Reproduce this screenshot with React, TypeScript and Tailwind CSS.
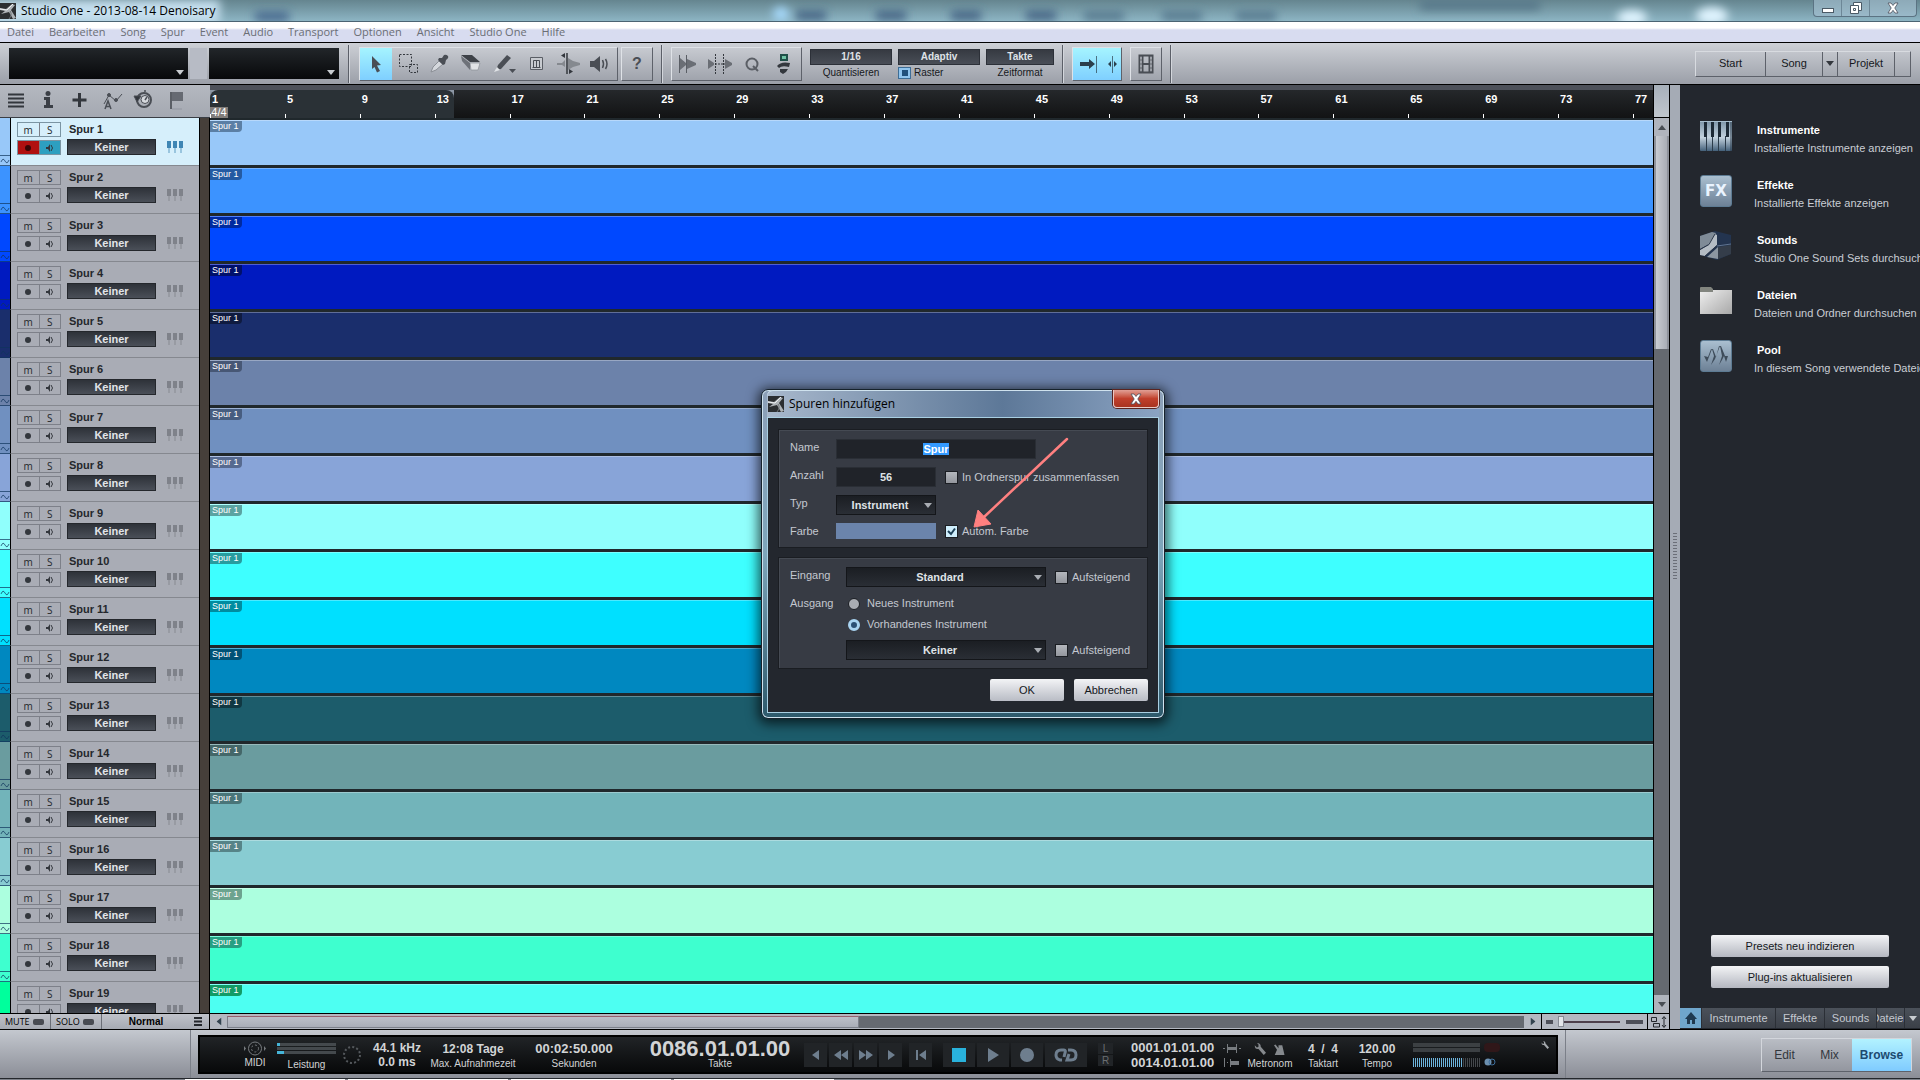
import { useEffect, useRef } from 'react';
import type { ReactNode } from 'react';

const menuItems = ['Datei', 'Bearbeiten', 'Song', 'Spur', 'Event', 'Audio', 'Transport', 'Optionen', 'Ansicht', 'Studio One', 'Hilfe'];

const bars = [1, 5, 9, 13, 17, 21, 25, 29, 33, 37, 41, 45, 49, 53, 57, 61, 65, 69, 73, 77];

const tracks = [
  { name: 'Spur 1', color: 'bg-[#98c8f9]', label: 'bg-[#5b7fa5]' },
  { name: 'Spur 2', color: 'bg-[#3c93ff]', label: 'bg-[#245aa2]' },
  { name: 'Spur 3', color: 'bg-[#0048ff]', label: 'bg-[#002aa0]' },
  { name: 'Spur 4', color: 'bg-[#001ac0]', label: 'bg-[#00106c]' },
  { name: 'Spur 5', color: 'bg-[#1a2e6c]', label: 'bg-[#0f1b40]' },
  { name: 'Spur 6', color: 'bg-[#6c82aa]', label: 'bg-[#475775]' },
  { name: 'Spur 7', color: 'bg-[#7090c0]', label: 'bg-[#475d80]' },
  { name: 'Spur 8', color: 'bg-[#88a4d8]', label: 'bg-[#566a90]' },
  { name: 'Spur 9', color: 'bg-[#90fffc]', label: 'bg-[#5ba3a2]' },
  { name: 'Spur 10', color: 'bg-[#3effff]', label: 'bg-[#279c9f]' },
  { name: 'Spur 11', color: 'bg-[#00e0ff]', label: 'bg-[#008ca0]' },
  { name: 'Spur 12', color: 'bg-[#0088c0]', label: 'bg-[#005276]' },
  { name: 'Spur 13', color: 'bg-[#1c5c6b]', label: 'bg-[#103843]' },
  { name: 'Spur 14', color: 'bg-[#6a9c9f]', label: 'bg-[#446769]' },
  { name: 'Spur 15', color: 'bg-[#72b4ba]', label: 'bg-[#497579]' },
  { name: 'Spur 16', color: 'bg-[#88ccd2]', label: 'bg-[#568488]' },
  { name: 'Spur 17', color: 'bg-[#acffdf]', label: 'bg-[#6ca38f]' },
  { name: 'Spur 18', color: 'bg-[#3effcf]', label: 'bg-[#279f82]' },
  { name: 'Spur 19', color: 'bg-[#4dfff2]', label: 'bg-[#129b66]', strip: 'bg-[#00ff9c]' },
];

const browserItems = [
  { title: 'Instrumente', text: 'Installierte Instrumente anzeigen', icon: <PianoIcon /> },
  { title: 'Effekte', text: 'Installierte Effekte anzeigen', icon: <FxIcon /> },
  { title: 'Sounds', text: 'Studio One Sound Sets durchsuchen', icon: <CubeIcon /> },
  { title: 'Dateien', text: 'Dateien und Ordner durchsuchen', icon: <FolderIcon /> },
  { title: 'Pool', text: 'In diesem Song verwendete Dateien', icon: <PoolIcon /> },
];

function Logo() {
  return (
    <svg className="size-4 shrink-0" viewBox="0 0 16 16">
      <rect width="16" height="16" fill="#2b2e31" />
      <path d="M0 5L6 6L12 1L15 2L11 7L16 15L13 16L9 9L1 11L5 8L0 7Z" fill="#aeb3b7" />
      <path d="M0 6L7 7L13 1" fill="none" stroke="#eceff1" />
      <path d="M10 8C12 11 11 13 9 16" fill="none" stroke="#6d7276" />
    </svg>
  );
}

function PianoIcon() {
  return (
    <svg className="size-8 shrink-0" viewBox="0 0 32 32">
      <defs>
        <linearGradient id="keys" x1="0" y1="0" x2="0" y2="1">
          <stop offset="0" stopColor="#7d95a8" />
          <stop offset=".55" stopColor="#c3d2de" />
          <stop offset="1" stopColor="#44607a" />
        </linearGradient>
      </defs>
      <rect y="1" width="32" height="30" rx="1" fill="url(#keys)" />
      <path d="M6.500 16V31M12.500 16V31M18.500 16V31M25.500 16V31M31 2V31" stroke="#2b3b4a" />
      <path d="M4 2H7V17H4ZM11 2H14V17H11ZM18 2H21V17H18ZM26 2H29V17H26Z" fill="#1d2a36" />
      <path d="M0 1.500H32" stroke="#a9c0d0" />
    </svg>
  );
}

function Tile({ children }: { children: ReactNode }) {
  return (
    <div className="flex size-8 shrink-0 items-center justify-center rounded-[3px] border border-[#5d7b93] bg-linear-to-b from-[#aabfd0] to-[#6d8196]">
      {children}
    </div>
  );
}

function FxIcon() {
  return (
    <Tile>
      <span className="font-['DejaVu_Sans',sans-serif] text-[15px] font-bold text-[#eaf4ff]">FX</span>
    </Tile>
  );
}

function CubeIcon() {
  return (
    <svg className="size-8 shrink-0" viewBox="0 0 32 32">
      <path d="M0 6L15 1L31 5V24L17 30L0 25Z" fill="#23344f" />
      <path d="M0 6L12 2L16 3L9 14L0 19Z" fill="#7f8b97" />
      <path d="M0 20L8 15L15 4L17 5V15L5 26L0 25Z" fill="#b4bcc4" />
      <path d="M7 27L18 17V29Z" fill="#8c96a1" />
      <path d="M18 17L31 15V24L18 29Z" fill="#343d4a" />
      <path d="M0 19.500L9 14.500L15 4M5 26L17 15.500" fill="none" stroke="#2a3648" />
      <path d="M17 16L31 14" stroke="#5f7390" />
    </svg>
  );
}

function FolderIcon() {
  return (
    <svg className="size-8 shrink-0" viewBox="0 0 32 32">
      <defs>
        <linearGradient id="folder" x1="0" y1="0" x2="1" y2="1">
          <stop offset="0" stopColor="#f2f2f2" />
          <stop offset="1" stopColor="#a8a8a8" />
        </linearGradient>
      </defs>
      <path d="M0 3H12V5H32V29H0Z" fill="url(#folder)" />
      <path d="M0 3Q0 2 1 2H11L13 4V7H0Z" fill="#82857f" />
    </svg>
  );
}

function PoolIcon() {
  return (
    <Tile>
      <svg className="size-7" viewBox="0 0 28 28" fill="#3e4c5a">
        <path d="M2 14L5 20L10 7L12 14L9 23L13 17L18 4L20 14L17 23L20 18L22 14L24 20L26 14L23 14L19 4H17L14 15L11 7H9L6 15Z" />
      </svg>
    </Tile>
  );
}

function Down({ className = 'fill-[#c8ccd0]' }: { className?: string }) {
  return (
    <svg className={`h-[5px] w-2 ${className}`} viewBox="0 0 8 5">
      <path d="M0 0H8L4 5Z" />
    </svg>
  );
}

function TitleBar() {
  return (
    <header className="relative flex h-[21px] shrink-0 items-center overflow-hidden bg-linear-to-b from-[#65858f] to-[#8db5c4]">
      <svg className="absolute inset-0 h-full w-full" preserveAspectRatio="none" viewBox="0 0 1920 21">
        <defs>
          <filter id="haze" x="-50%" y="-100%" width="200%" height="300%">
            <feGaussianBlur stdDeviation="5" />
          </filter>
        </defs>
        <g filter="url(#haze)">
          <rect x="-20" y="0" width="240" height="24" fill="#c5dfee" />
          <rect x="255" y="12" width="34" height="9" fill="#42648a" />
          <ellipse cx="781" cy="14" rx="8" ry="7" fill="#a8dcff" />
          {[810, 890, 965, 1040].map((x) => (
            <rect key={x} x={x - 14} y="11" width="30" height="9" fill="#3f5f80" />
          ))}
          {[1102, 1180, 1254].map((x) => (
            <rect key={x} x={x - 18} y="12" width="40" height="8" fill="#4f7187" />
          ))}
          <rect x="1420" y="0" width="120" height="10" fill="#567789" />
          <ellipse cx="1632" cy="18" rx="15" ry="8" fill="#e0f4ff" />
          <ellipse cx="1712" cy="16" rx="16" ry="9" fill="#e0f4ff" />
        </g>
      </svg>
      <div className="relative flex min-w-0 flex-1 items-center gap-[5px]">
        <Logo />
        <h1 className="font-['Open_Sans',sans-serif] text-[12px] text-black">Studio One - 2013-08-14 Denoisary</h1>
      </div>
      <div className="relative mr-[3px] flex h-[17px] self-start rounded-b border border-t-0 border-[#5b7383] bg-[#a8c3d3]/60">
        <button aria-label="Minimieren" className="flex w-7 items-center justify-center border-r border-[#6d8797]">
          <svg className="h-3 w-3" viewBox="0 0 12 12"><rect x=".5" y="6.500" width="11" height="4" fill="#fff" stroke="#4b5a66" /></svg>
        </button>
        <button aria-label="Wiederherstellen" className="flex w-7 items-center justify-center border-r border-[#6d8797]">
          <svg className="h-3 w-3" viewBox="0 0 12 12" fill="#fff" stroke="#4b5a66"><path d="M3.500.5h8v8h-8z" /><path d="M.5 3.500h8v8h-8z" /><path d="M3.500 6.500h2v2h-2z" /></svg>
        </button>
        <button aria-label="Schließen" className="flex w-[46px] items-center justify-center">
          <CloseGlyph />
        </button>
      </div>
    </header>
  );
}

function CloseGlyph() {
  return (
    <svg className="h-3 w-3" viewBox="0 0 12 12">
      <path d="M1 1H4L6 3.500L8 1H11L7.800 6L11 11H8L6 8.300L4 11H1L4.200 6Z" fill="#fff" stroke="#4b4f5c" strokeWidth=".8" />
    </svg>
  );
}

function ToolButton({ label, active, children }: { label: string; active?: boolean; children: ReactNode }) {
  return (
    <button
      aria-label={label}
      className={`flex h-full flex-1 items-center justify-center ${active ? 'bg-linear-to-b from-[#a5f4ff] to-[#7fcfff]' : ''}`}
    >
      <svg className="h-6 w-7" viewBox="0 0 28 24" fill="#4a4e55">
        {children}
      </svg>
    </button>
  );
}

const groupBox = 'flex h-[34px] border-t border-l border-r border-b border-t-[#dfe2e7] border-l-[#dfe2e7] border-r-[#5d616a] border-b-[#5d616a]';

function Divider() {
  return <div className="h-[38px] w-px bg-[#5b5f68] shadow-[1px_0_0_#d3d6dc]" />;
}

function Field({ value, children, className }: { value: string; children: ReactNode; className: string }) {
  return (
    <div className={`flex flex-col gap-[2px] ${className}`}>
      <button className="flex h-4 items-center justify-center border border-[#2c3038] bg-linear-to-b from-[#363a42] to-[#494e57] text-[10px] font-bold text-[#dfe2e6]">
        {value}
      </button>
      <div className="relative flex h-3 items-center justify-center text-[10px] text-[#15181c]">{children}</div>
    </div>
  );
}

function Toolbar() {
  return (
    <div className="flex h-[43px] shrink-0 items-center border-y border-black bg-linear-to-b from-[#cdd0d6] to-[#9b9fa8]">
      <button aria-label="Parameter" className="ml-[9px] flex h-[31px] w-[179px] items-end justify-end bg-linear-to-b from-[#22262a] to-[#08090b] p-1">
        <Down />
      </button>
      <div className="mx-[2px] h-[31px] w-[17px] bg-[#b7bbc5]" />
      <button aria-label="Wert" className="flex h-[31px] w-[130px] items-end justify-end bg-linear-to-b from-[#22262a] to-[#08090b] p-1">
        <Down />
      </button>
      <div className="ml-[9px] flex items-center">
        <Divider />
      </div>
      <div className={`${groupBox} ml-[10px] w-[259px]`}>
        <ToolButton label="Auswahl" active>
          <path d="M10 4L19 13L15 13.500L18 19L15 20.500L12.500 15L10 17Z" />
        </ToolButton>
        <ToolButton label="Bereich">
          <path d="M5.500 2.500H17.500V14.500H5.500ZM15.500 12.500H23.500V20.500H15.500Z" fill="none" stroke="#33373d" strokeDasharray="2 1.500" />
        </ToolButton>
        <ToolButton label="Farbpipette">
          <path d="M5 20L7 15L13 9L17 12L10 18Z" fill="#d5d8dd" stroke="#8b8f96" />
          <path d="M13 6L16 6L18 3Q20 2 22 4Q23 6 20 8L19 12L17 13L12 8Z" />
        </ToolButton>
        <ToolButton label="Radierer">
          <path d="M3 3H14L22 10H12Z" fill="#3e4248" />
          <path d="M12 11H22L20 18H13Z" fill="#e1e3e6" stroke="#8b8f96" strokeWidth=".7" />
          <path d="M3 4L12 11V18L4 9Z" fill="#6e7279" />
        </ToolButton>
        <ToolButton label="Malen">
          <path d="M5 18L7 13L16 3L20 6L10 17Z" />
          <path d="M3 20L6 15L9 18Z" fill="#dfe2e6" />
          <path d="M18 17H25L21.500 21Z" />
        </ToolButton>
        <ToolButton label="Stumm">
          <path d="M7.500 5.500H19.500V17.500H7.500Z" fill="#c8cbd0" stroke="#5a5e65" />
          <path d="M10.500 15V8.500H16.500V15M13.500 9V15M9.500 15.500H17.500" fill="none" stroke="#4a4e55" />
        </ToolButton>
        <ToolButton label="Trennen">
          <path d="M2 11H7L10 8V15L7 13H2ZM13 6L18 9L25 11V13L18 15L13 18Z" fill="#85898f" />
          <path d="M12 1V22" stroke="#33373d" strokeWidth="1.500" />
          <path d="M10 1V6L6 3.500ZM14 17V22L18 19.500Z" fill="#33373d" />
        </ToolButton>
        <ToolButton label="Anhören">
          <path d="M3 9H7L13 4V20L7 15H3Z" />
          <path d="M15.500 8Q17.500 12 15.500 16M18.500 7Q21.500 12 18.500 17" fill="none" stroke="#4a4e55" strokeWidth="1.500" />
        </ToolButton>
      </div>
      <button className={`${groupBox} ml-[3px] w-8 items-center justify-center text-[16px] font-bold text-[#4a4e55]`}>?</button>
      <div className="ml-2 flex items-center">
        <Divider />
      </div>
      <div className={`${groupBox} ml-[9px] w-[131px]`}>
        <ToolButton label="Transienten">
          <path d="M5.500 3V21M12.500 3V21" stroke="#5a5e65" />
          <path d="M6 6L12 11V13L6 18ZM13 7L22 11V13L13 17Z" fill="#6a6e75" />
        </ToolButton>
        <ToolButton label="Biegen">
          <path d="M9.500 2V22M17.500 2V22" stroke="#33373d" strokeDasharray="2 1" />
          <path d="M2 7L8 11V13L2 17ZM19 7L26 11V13L19 17Z" fill="#6a6e75" />
          <path d="M9 12H19" stroke="#33373d" strokeDasharray="2 1" />
        </ToolButton>
        <ToolButton label="Quantisieren">
          <circle cx="13" cy="12" r="5.500" fill="none" stroke="#5a5e65" strokeWidth="2" />
          <path d="M14 14L19 19" stroke="#5a5e65" strokeWidth="2" />
        </ToolButton>
        <ToolButton label="Makros">
          <path d="M9 2H17V9H9Z" fill="#1f4f48" />
          <path d="M11 4H15V7H11Z" fill="#6fc3a5" />
          <path d="M6 14Q10 9 19 11L18 15Q11 13 8 16Z" fill="#33373d" />
          <path d="M9 17H17L15 20L12 22L9 20Z" fill="#33373d" />
        </ToolButton>
      </div>
      <Field value="1/16" className="ml-2 w-[82px]">Quantisieren</Field>
      <Field value="Adaptiv" className="ml-[6px] w-[82px]">
        <span className="absolute left-0 flex h-3 w-[13px] items-center justify-center border border-[#3d6d96] bg-[#8fc4ee]">
          <span className="size-[6px] bg-[#20507c]" />
        </span>
        <span className="absolute left-4">Raster</span>
      </Field>
      <Field value="Takte" className="ml-[6px] w-[68px]">Zeitformat</Field>
      <div className="ml-2 flex items-center">
        <Divider />
      </div>
      <button aria-label="Autoscroll" className={`${groupBox} ml-[9px] w-[50px] items-center justify-center bg-linear-to-b from-[#a5f4ff] to-[#7fcfff]`}>
        <svg className="h-6 w-10" viewBox="0 0 40 24" fill="#2b3f4c">
          <path d="M3 10H12V7L18 12L12 17V14H3Z" />
          <path d="M19.500 4V21M35.500 4V21" stroke="#2b3f4c" strokeOpacity=".7" />
          <path d="M34 9V15L31 12ZM37 9V15L40 12Z" />
        </svg>
      </button>
      <button aria-label="Video" className={`${groupBox} ml-2 w-8 items-center justify-center`}>
        <svg className="h-5 w-4" viewBox="0 0 16 20">
          <path d="M1.500 1.500H14.500V18.500H1.500ZM4.500 1.500V18.500M11.500 1.500V18.500M4.500 10H11.500" fill="none" stroke="#4a4e55" strokeWidth="2" />
          <path d="M3 3V18M13 3V18" stroke="#b9bcc3" strokeDasharray="2 2" />
        </svg>
      </button>
      <div className="ml-2 flex items-center">
        <Divider />
      </div>
      <nav className="mr-[9px] ml-auto flex h-[26px] divide-x divide-[#5d616a] border border-[#d8dbe0] border-r-[#5d616a] border-b-[#5d616a] text-[11px] text-[#15181c]">
        <button className="w-[70px]">Start</button>
        <button className="w-[57px]">Song</button>
        <button aria-label="Songs" className="flex w-[15px] items-center justify-center">
          <Down className="fill-[#33373d]" />
        </button>
        <button className="w-[57px]">Projekt</button>
        <button aria-label="Projekte" className="w-[15px]" />
      </nav>
    </div>
  );
}

function HeadTools() {
  const cls = 'h-6 w-8';
  return (
    <div className="flex h-[33px] shrink-0 items-center border-b border-[#3a3e45] bg-linear-to-b from-[#b4b8c0] to-[#a4a8b1] pb-[2px] text-[#3b3f46]">
      <button aria-label="Trackliste">
        <svg className={cls} viewBox="0 0 32 24"><path d="M8 6.500H24M8 10.500H24M8 14.500H24M8 18.500H24" stroke="#33373d" strokeWidth="2" /></svg>
      </button>
      <button aria-label="Inspektor">
        <svg className={cls} viewBox="0 0 32 24" fill="#3b3f46"><circle cx="16" cy="5.500" r="2.500" /><path d="M12 9H18V17H21V20H12V17H14V12H12Z" /></svg>
      </button>
      <button aria-label="Spuren hinzufügen">
        <svg className={cls} viewBox="0 0 32 24"><path d="M15.500 5V19M8.500 12H22.500" stroke="#33373d" strokeWidth="3" /></svg>
      </button>
      <button aria-label="Automation">
        <svg className={cls} viewBox="0 0 32 24" fill="none" stroke="#4a4e55"><path d="M8 16L13 7L20 13L26 6" /><circle cx="13" cy="7" r="1.500" fill="#4a4e55" /><circle cx="20" cy="12" r="1.500" fill="#4a4e55" /><path d="M9 21L12 13L15 21M10 18.500H14" strokeWidth="1.500" /></svg>
      </button>
      <button aria-label="Tempo">
        <svg className={cls} viewBox="0 0 32 24" fill="none" stroke="#4a4e55"><circle cx="16" cy="12" r="7" strokeWidth="2" /><path d="M6 8L13 8L9 14Z" fill="#33373d" /><circle cx="17" cy="11.500" r="4" fill="#d5d8dd" /><path d="M17 12L19 9M17 2V4" strokeWidth="1.500" /></svg>
      </button>
      <button aria-label="Marker">
        <svg className={cls} viewBox="0 0 32 24"><path d="M11 4V21" stroke="#5a5e65" strokeWidth="2" /><path d="M12 4H23V13H12Z" fill="#666a72" /><path d="M12 21H22" stroke="#9296a0" /></svg>
      </button>
    </div>
  );
}

function TrackHead({ track, selected }: { track: (typeof tracks)[number]; selected: boolean }) {
  const line = selected ? 'border-[#7b95a3]' : 'border-[#7d8089]';
  return (
    <li className="flex h-12 shrink-0">
      <div className={`flex w-[10px] flex-col justify-end ${track.strip ?? track.color}`}>
        <svg className="h-[11px] w-[10px]" viewBox="0 0 10 11" fill="none" stroke="#10355c" strokeOpacity=".7">
          <path d="M0 .5H10M0 10.500H10M1 7Q3 2 5 6T9 5" />
        </svg>
      </div>
      <div className={`flex flex-1 border-b border-l border-b-[#85888f] border-l-black pt-1 pl-[6px] ${selected ? 'bg-[#d6effb]' : 'bg-[#a9acb5]'}`}>
        <div className="flex w-11 flex-col gap-[3px] font-['Open_Sans',sans-serif] text-[10px] leading-none text-[#24272c]">
          <div className={`flex h-[15px] divide-x divide-[#7d8089] border ${line}`}>
            <button className="flex-1" aria-label={`${track.name} stumm`}>m</button>
            <button className="flex-1" aria-label={`${track.name} solo`}>S</button>
          </div>
          <div className={`flex h-[15px] divide-x divide-[#7d8089] border ${line}`}>
            <button aria-label={`${track.name} aufnahme`} className={`flex flex-1 items-center justify-center ${selected ? 'bg-[#b01010]' : ''}`}>
              <svg className="size-[6px]" viewBox="0 0 6 6"><circle cx="3" cy="3" r="3" fill={selected ? '#3a0606' : '#33373d'} /></svg>
            </button>
            <button aria-label={`${track.name} monitor`} className={`flex flex-1 items-center justify-center ${selected ? 'bg-[#2d9fc0]' : ''}`}>
              <svg className="size-2" viewBox="0 0 8 8"><path d="M0 3H2L4 0V8L2 5H0Z" fill="#33373d" /><path d="M5 1Q8 4 5 7" fill="none" stroke="#33373d" /></svg>
            </button>
          </div>
        </div>
        <div className="ml-[6px] flex w-[89px] flex-col">
          <span className="pl-[2px] text-[11px] leading-[15px] font-bold text-[#24272c]">{track.name}</span>
          <button className="mt-[2px] h-4 border border-[#24272c] bg-linear-to-b from-[#2e3239] to-[#4a4f58] text-[11px] leading-none font-bold text-[#e2e4e8]">Keiner</button>
        </div>
        <svg className="mt-[19px] ml-[11px] h-3 w-4" viewBox="0 0 16 12" fill={selected ? '#3f86b4' : '#7f828a'}>
          <path d="M0 0H4V7H0ZM6 0H10V7H6ZM12 0H16V7H12Z" />
          <path d="M1 7H3V12H1ZM7 7H9V12H7ZM13 7H15V12H13Z" opacity=".4" />
        </svg>
      </div>
    </li>
  );
}

function TrackList() {
  return (
    <section className="flex w-[210px] shrink-0 flex-col">
      <HeadTools />
      <div className="flex min-h-0 flex-1">
        <ul className="flex w-[199px] flex-col overflow-hidden">
          {tracks.map((track, i) => (
            <TrackHead key={track.name} track={track} selected={i === 0} />
          ))}
        </ul>
        <div className="w-[11px] border-x border-black bg-[#463f3a]" />
      </div>
      <div className="flex h-[17px] shrink-0 items-center border-y border-black bg-linear-to-b from-[#c0c3ca] to-[#a6aab3] text-[10px] text-black">
        <button className="flex h-full w-[51px] items-center gap-[3px] border-r border-[#6a6e76] pl-[5px] font-['Open_Sans',sans-serif] text-[9px]">
          MUTE <span className="h-[6px] w-[11px] rounded-xs bg-[#484b52]" />
        </button>
        <button className="flex h-full w-[51px] items-center gap-[3px] border-r border-[#6a6e76] pl-[5px] font-['Open_Sans',sans-serif] text-[9px]">
          SOLO <span className="h-[6px] w-[11px] rounded-xs bg-[#484b52]" />
        </button>
        <button className="flex-1 pr-1 font-bold">Normal</button>
        <svg className="mr-[7px] h-[9px] w-2" viewBox="0 0 8 9"><path d="M0 1H8M0 4.500H8M0 8H8" stroke="#24272c" strokeWidth="2" /></svg>
        <div className="h-full w-px bg-black" />
      </div>
    </section>
  );
}

function Ruler() {
  return (
    <div className="relative flex h-[33px] shrink-0 overflow-hidden border-t-[5px] border-[#4d515a] bg-linear-to-b from-[#25282b] to-[#121314]">
      <div className="absolute -top-[5px] left-0 h-[33px] w-[244px] bg-[#8d97a5]">
        <div className="mt-[5px] h-7 rounded-t-lg bg-[#2a3136]" />
      </div>
      <span className="absolute bottom-0 left-0 w-[18px] bg-[#817d7a] text-center text-[11px] leading-[11px] text-white">4/4</span>
      {bars.map((bar) => (
        <div key={bar} className="relative flex w-[5.19%] shrink-0 flex-col justify-between">
          <span className="pt-[3px] pl-[2px] text-[11px] leading-3 font-bold text-white">{bar}</span>
          <span className="h-1 w-px bg-white" />
        </div>
      ))}
    </div>
  );
}

function Arrange() {
  return (
    <main className="flex min-w-0 flex-1 flex-col">
      <div className="flex min-h-0 flex-1">
        <div className="flex min-w-0 flex-1 flex-col">
          <Ruler />
          <div className="flex-1 overflow-hidden bg-[#20282c]">
            {tracks.map((track) => (
              <div key={track.name} className="h-12 pt-[2px] pb-px">
                <div className={`h-full border-t border-white/30 ${track.color}`}>
                  <span className={`block h-[11px] w-8 rounded-br pl-[2px] text-[9px] leading-[11px] text-white ${track.label}`}>Spur 1</span>
                </div>
              </div>
            ))}
          </div>
        </div>
        <div className="flex w-[17px] shrink-0 flex-col border-x border-black bg-[#b0b4bd]">
          <div className="h-[33px] shrink-0 border-b border-black bg-linear-to-b from-[#a7b0ba] to-[#c0c6ce]" />
          <button aria-label="Nach oben" className="flex h-[18px] items-center justify-center">
            <Down className="rotate-180 fill-[#4a4e55]" />
          </button>
          <div className="flex-1 bg-[#656970]">
            <div className="h-[213px] border-x-2 border-[#8e929b] bg-linear-to-r from-[#c9ccd2] to-[#a9adb6]" />
          </div>
          <button aria-label="Nach unten" className="flex h-[18px] items-center justify-center">
            <Down className="fill-[#4a4e55]" />
          </button>
        </div>
      </div>
      <div className="flex h-[17px] shrink-0 items-center border-y border-black bg-[#b4b8c1]">
        <button aria-label="Nach links" className="flex w-[17px] justify-center">
          <Down className="rotate-90 fill-[#33434f]" />
        </button>
        <div className="flex h-3 flex-1 bg-[#666a71]">
          <div className="w-[632px] border border-[#7c808a] border-t-[#96626c] bg-linear-to-b from-[#bcc0c9] to-[#a9adb7]" />
        </div>
        <button aria-label="Nach rechts" className="flex w-[17px] justify-center">
          <Down className="-rotate-90 fill-[#33434f]" />
        </button>
        <div className="flex h-full w-[107px] items-center border-x border-black px-1">
          <span className="h-1 w-[7px] bg-[#4d4f58]" />
          <span className="ml-[5px] h-[11px] w-[6px] border border-[#888c95] bg-[#e4e6ea]" />
          <span className="h-[2px] flex-1 bg-[#4d3f4a]" />
          <span className="ml-[6px] h-1 w-[17px] bg-[#4d4f58]" />
        </div>
        <div className="flex h-full w-[22px] items-center justify-center border-r border-black">
          <svg className="h-3 w-4" viewBox="0 0 16 12" fill="none" stroke="#24272c">
            <path d="M.5 1.500H5.500V5.500H.5ZM2.500 7.500H8.500V11H2.500ZM13 1V11M11 3L13 .5L15 3M11 9L13 11.500L15 9" />
          </svg>
        </div>
      </div>
    </main>
  );
}

function Browser() {
  return (
    <aside className="flex w-[240px] shrink-0 flex-col overflow-hidden border-b border-black bg-[#23272e]">
      <ul className="flex flex-1 flex-col gap-[23px] pt-[35px] pl-5">
        {browserItems.map((item) => (
          <li key={item.title}>
            <a href={`#${item.title}`} className="flex h-8 items-start">
              {item.icon}
              <span className="ml-[22px] flex flex-col pt-px text-[11px] leading-[18px] whitespace-nowrap text-[#c9cdd4]">
                <strong className="pl-[3px] text-white">{item.title}</strong>
                <span>{item.text}</span>
              </span>
            </a>
          </li>
        ))}
      </ul>
      <div className="mb-5 flex flex-col gap-[9px] px-[31px] text-[11px] text-[#15181c]">
        <button className="h-[22px] rounded-xs bg-linear-to-b from-[#f3f4f6] to-[#b4b7c0]">Presets neu indizieren</button>
        <button className="h-[22px] rounded-xs bg-linear-to-b from-[#f3f4f6] to-[#b4b7c0]">Plug-ins aktualisieren</button>
      </div>
      <nav className="mb-px flex h-5 shrink-0 divide-x divide-[#2b2f36] bg-linear-to-b from-[#4b515a] to-[#3b4048] text-[11px] text-[#c4c8d0]">
        <button aria-label="Home" className="flex w-[22px] items-center justify-center bg-[#6fa6cc]">
          <svg className="size-3" viewBox="0 0 12 12"><path d="M6 0L12 7H10V12H7V8H5V12H2V7H0Z" fill="#1f3a50" /></svg>
        </button>
        <button className="w-[74px]">Instrumente</button>
        <button className="w-[49px]">Effekte</button>
        <button className="w-[52px]">Sounds</button>
        <button className="flex w-[28px] items-center justify-center overflow-hidden">
          <span>Dateien</span>
        </button>
        <button aria-label="Mehr" className="flex flex-1 items-center justify-center">
          <Down />
        </button>
      </nav>
    </aside>
  );
}

function Readout({ value, label, className, valueClass = 'text-[12px]' }: { value: ReactNode; label: string; className: string; valueClass?: string }) {
  return (
    <div className={`flex shrink-0 flex-col items-center text-center ${className}`}>
      <span className={`flex h-[19px] items-center font-bold whitespace-pre text-[#d2d4d6] ${valueClass}`}>{value}</span>
      <span className="text-[10px] leading-3 whitespace-nowrap text-[#d2d4d6]">{label}</span>
    </div>
  );
}

function TransportButton({ label, wide, children }: { label: string; wide?: boolean; children: ReactNode }) {
  return (
    <button aria-label={label} className={`flex h-6 items-center justify-center bg-[#212427] ${wide ? 'w-8' : 'w-[23px]'}`}>
      <svg className="size-4" viewBox="0 0 16 16" fill="#6e7e8e">
        {children}
      </svg>
    </button>
  );
}

const wrench = 'M1 3L4 6L6 5L6 2L4 0Q9 0 9 5L16 13L13 16L6 8Q1 9 1 3Z';

function Transport() {
  return (
    <footer className="flex h-12 shrink-0 bg-linear-to-b from-[#c4c8cf] to-[#8b8e97]">
      <div className="w-[191px] shrink-0 border-r border-[#7b7f88]" />
      <div className="min-w-0 flex-1 border-r border-[#7b7f88] px-[7px] pt-[5px]">
        <div className="flex h-[39px] items-center border-2 border-black bg-linear-to-b from-[#212427] to-[#08090a]">
          <div className="ml-[41px] flex w-7 flex-col items-center">
            <svg className="h-[17px] w-6" viewBox="0 0 24 17" fill="none" stroke="#777b7f">
              <circle cx="12" cy="8.500" r="6.500" />
              <circle cx="12" cy="8.500" r="3.500" strokeDasharray="2 2" />
              <path d="M1 6V11L3 8.500ZM21 6V11L23 8.500Z" fill="#777b7f" stroke="none" />
            </svg>
            <span className="text-[10px] leading-3 text-[#d2d4d6]">MIDI</span>
          </div>
          <div className="ml-2 flex w-[59px] flex-col items-center gap-[5px] pt-1">
            <div className="flex w-full flex-col gap-px">
              <div className="h-[3px] bg-[#44494d]"><div className="h-full w-[3px] bg-[#46b5d8]" /></div>
              <div className="h-[3px] bg-[#44494d]" />
              <div className="h-[3px] bg-[#44494d]"><div className="h-full w-[7px] bg-[#46b5d8]" /></div>
            </div>
            <span className="text-[10px] leading-3 text-[#d2d4d6]">Leistung</span>
          </div>
          <svg className="ml-[6px] size-5 shrink-0" viewBox="0 0 20 20">
            <circle cx="10" cy="10" r="8" fill="none" stroke="#55595d" strokeWidth="2" strokeDasharray="2 2.190" />
          </svg>
          <div className="ml-[6px] flex w-[58px] flex-col items-center text-[12px] leading-[14px] font-bold whitespace-nowrap text-[#d2d4d6]">
            <span>44.1 kHz</span>
            <span>0.0 ms</span>
          </div>
          <Readout value="12:08 Tage" label="Max. Aufnahmezeit" className="ml-1 w-[86px]" />
          <Readout value="00:02:50.000" label="Sekunden" valueClass="text-[13px]" className="ml-[13px] w-[90px]" />
          <Readout value="0086.01.01.00" label="Takte" valueClass="text-[22px]" className="ml-[25px] w-[152px]" />
          <div className="ml-2 flex gap-[2px]">
            <TransportButton label="Takt zurück"><path d="M11 3V13L4 8Z" /></TransportButton>
            <TransportButton label="Zurückspulen"><path d="M8 3V13L1 8ZM15 3V13L8 8Z" /></TransportButton>
            <TransportButton label="Vorspulen"><path d="M1 3V13L8 8ZM8 3V13L15 8Z" /></TransportButton>
            <TransportButton label="Takt vor"><path d="M5 3V13L12 8Z" /></TransportButton>
          </div>
          <div className="ml-[7px]">
            <TransportButton label="Anfang"><path d="M3 3H5V13H3ZM13 3V13L6 8Z" /></TransportButton>
          </div>
          <div className="ml-[11px] flex gap-[2px]">
            <TransportButton label="Stopp" wide><path d="M1 1H15V15H1Z" fill="#29b2dc" /></TransportButton>
            <TransportButton label="Wiedergabe" wide><path d="M3 1V15L14 8Z" /></TransportButton>
            <TransportButton label="Aufnahme" wide><circle cx="8" cy="8" r="7" /></TransportButton>
            <button aria-label="Loop" className="flex h-6 w-[42px] items-center justify-center bg-[#212427]">
              <svg className="h-4 w-6" viewBox="0 0 24 16" fill="none" stroke="#6e7e8e" strokeWidth="3">
                <path d="M8 13H6Q2 12 2 8Q2 3 7 3H10Q12 3 11 6L10 10M14 3H17Q22 3 22 8Q22 13 17 13H13L15 7" />
              </svg>
            </button>
          </div>
          <div className="ml-[11px] flex flex-col gap-px text-[10px] leading-[11px] text-[#6a6e72]">
            <button className="w-[15px] bg-[#212427]">L</button>
            <button className="w-[15px] bg-[#212427]">R</button>
          </div>
          <div className="ml-[18px] flex w-[86px] flex-col text-[13px] leading-[15px] font-bold text-[#d2d4d6]">
            <span>0001.01.01.00</span>
            <span>0014.01.01.00</span>
          </div>
          <svg className="ml-[6px] h-6 w-[18px] shrink-0" viewBox="0 0 18 24" fill="#777b7f">
            <path d="M4 1H5V4H13V1H14V10H13V7H5V10H4ZM0 5H2V6H0ZM16 5H18V6H16ZM1 15H2V24H1ZM4 19H5V20H4ZM7 16H8V18H16V22H8V24H7Z" />
          </svg>
          <Readout
            value={
              <span className="flex gap-2">
                <svg className="size-3" viewBox="0 0 16 16" fill="#85898d"><path d={wrench} /></svg>
                <svg className="size-3" viewBox="0 0 16 16" fill="#85898d"><path d="M6 3L11 3L14 16H1L4 9L0 3L2 2L6 7Z" /></svg>
              </span>
            }
            label="Metronom"
            className="ml-[5px] w-12"
          />
          <Readout value="4  /  4" label="Taktart" className="ml-[7px] w-11" />
          <Readout value="120.00" label="Tempo" className="ml-[10px] w-11" />
          <div className="ml-[14px] flex flex-col gap-[6px]">
            <div className="flex gap-1">
              <div className="flex w-[67px] flex-col gap-px">
                <span className="h-1 bg-[#3c4043]" />
                <span className="h-1 bg-[#3c4043]" />
              </div>
              <div className="h-[9px] w-4 rounded bg-[#301719]" />
            </div>
            <div className="flex items-center gap-1">
              <svg className="h-[9px] w-[67px]" viewBox="0 0 67 9">
                <path d="M0 4.500H50" stroke="#6db4dc" strokeWidth="9" strokeDasharray="1 1" />
                <path d="M50 4.500H67" stroke="#44484c" strokeWidth="9" strokeDasharray="1 1" />
              </svg>
              <svg className="h-2 w-3" viewBox="0 0 12 8">
                <circle cx="4" cy="4" r="3.500" fill="#6c8fae" />
                <circle cx="8" cy="4" r="3" fill="none" stroke="#3f6f9c" />
              </svg>
            </div>
          </div>
          <svg className="mt-1 mr-[7px] ml-auto size-2 self-start" viewBox="0 0 16 16" fill="#a5a9ad"><path d={wrench} /></svg>
        </div>
      </div>
      <nav className="mt-2 mr-2 ml-[195px] flex h-[34px] shrink-0 border border-[#d3d6dc] border-b-[#5d616a] text-[12px] text-[#33373d]">
        <button className="w-[45px]">Edit</button>
        <button className="w-[45px]">Mix</button>
        <button className="w-[59px] bg-linear-to-b from-[#b2f2ff] to-[#7fcbff] font-bold text-[#1c4a70]">Browse</button>
      </nav>
    </footer>
  );
}

function Check({ id, children, checked }: { id: string; children: ReactNode; checked?: boolean }) {
  return (
    <label htmlFor={id} className="relative flex items-center gap-1 whitespace-nowrap">
      <input
        id={id}
        type="checkbox"
        defaultChecked={checked}
        className="peer size-[13px] appearance-none border border-[#1b1e23] bg-linear-to-b from-[#b4b7bd] to-[#94979e] checked:bg-[#cfeefc] checked:bg-none"
      />
      <svg className="pointer-events-none absolute left-[2px] hidden size-[9px] peer-checked:block" viewBox="0 0 9 9">
        <path d="M1 4L4 7L8 1.500" fill="none" stroke="#1c4058" strokeWidth="2" />
      </svg>
      {children}
    </label>
  );
}

function Select({ id, value, className }: { id: string; value: string; className: string }) {
  return (
    <div className={`relative flex h-5 items-center ${className}`}>
      <select
        id={id}
        aria-label={id}
        className="h-full w-full appearance-none border border-[#14161a] bg-linear-to-b from-[#1b1e23] to-[#2a2e35] pr-5 pl-2 text-center text-[11px] font-bold text-[#dfe2e6] [text-align-last:center]"
      >
        <option>{value}</option>
      </select>
      <span className="pointer-events-none absolute right-1">
        <Down className="fill-[#a9adb3]" />
      </span>
    </div>
  );
}

function Dialog() {
  const nameRef = useRef<HTMLInputElement>(null);

  useEffect(() => {
    nameRef.current?.focus();
    nameRef.current?.select();
  }, []);

  const box = 'border border-[#1a1d22] bg-[#373b44] shadow-[inset_1px_1px_0_#454a53]';
  const field = 'border border-[#2a2e35] bg-[#202329] text-center text-[11px] font-bold text-[#dfe2e6] outline-none';
  const label = 'self-start leading-4';

  return (
    <form
      role="dialog"
      aria-label="Spuren hinzufügen"
      className="absolute top-[389px] left-[761px] w-[404px] rounded-[7px] border border-[#16222c] bg-linear-to-b from-[#8da0b8] via-[#7ea6bb] to-[#2e5a6c] px-[5px] pb-[5px] shadow-[inset_0_0_0_1px_#cfe2ee,0_2px_12px_3px_rgba(0,0,0,0.65)]"
    >
      <div className="flex h-[27px] items-center rounded-t-md bg-linear-to-r from-[#a8b8cc] via-[#5d7898] via-60% to-[#8ba3c2] shadow-[inset_0_1px_0_#cfe2ee]">
        <span className="ml-px flex"><Logo /></span>
        <h2 className="ml-[5px] flex-1 font-['Open_Sans',sans-serif] text-[12px] text-black">Spuren hinzufügen</h2>
        <button type="button" aria-label="Schließen" className="flex h-[18px] w-[46px] items-center justify-center self-start rounded-b border border-t-0 border-[#e9c9c4] bg-linear-to-b from-[#e0a096] via-[#c1402c] to-[#a83320] shadow-[0_0_0_1px_#5a2420]">
          <CloseGlyph />
        </button>
      </div>
      <div className="border border-[#a9cfe2] bg-[#23272e] px-[10px] pt-[11px] pb-[11px] text-[11px] text-[#c4c8d0]">
        <div className={`${box} flex h-[119px] flex-col gap-2 pt-[9px] pl-[11px]`}>
          <div className="flex h-5 items-center">
            <label htmlFor="name" className={`${label} w-[46px]`}>Name</label>
            <input id="name" ref={nameRef} defaultValue="Spur" className={`${field} h-5 w-[200px] selection:bg-[#3399ff] selection:text-white`} />
          </div>
          <div className="flex h-5 items-center">
            <label htmlFor="count" className={`${label} w-[46px]`}>Anzahl</label>
            <input id="count" defaultValue="56" className={`${field} mr-[9px] h-5 w-[100px]`} />
            <Check id="folder-track">In Ordnerspur zusammenfassen</Check>
          </div>
          <div className="flex h-5 items-center">
            <label htmlFor="Typ" className={`${label} w-[46px]`}>Typ</label>
            <Select id="Typ" value="Instrument" className="w-[100px]" />
          </div>
          <div className="flex h-4 items-center">
            <label htmlFor="color" className={`${label} w-[46px]`}>Farbe</label>
            <button id="color" type="button" className="mr-[9px] h-4 w-[100px] bg-[#6b84ab]" />
            <Check id="auto-color" checked>Autom. Farbe</Check>
          </div>
        </div>
        <div className={`${box} mt-[9px] flex h-[112px] flex-col pt-[9px] pl-[11px]`}>
          <div className="flex items-center">
            <label htmlFor="Eingang" className={`${label} w-14`}>Eingang</label>
            <Select id="Eingang" value="Standard" className="mr-[9px] w-[200px]" />
            <Check id="in-asc">Aufsteigend</Check>
          </div>
          <div className="mt-[6px] flex">
            <span className="w-[58px] leading-5">Ausgang</span>
            <div className="flex flex-col">
              <label className="flex h-[21px] items-center gap-[7px]">
                <input type="radio" name="out" className="size-3 appearance-none rounded-full border border-[#1b1e23] bg-[#a9acb2]" />
                Neues Instrument
              </label>
              <label className="flex h-[21px] items-center gap-[7px]">
                <input type="radio" name="out" defaultChecked className="size-3 appearance-none rounded-full border-3 border-[#a9d4f2] bg-[#2b5075]" />
                Vorhandenes Instrument
              </label>
            </div>
          </div>
          <div className="mt-[5px] ml-14 flex items-center">
            <Select id="Ausgang" value="Keiner" className="mr-[9px] w-[200px]" />
            <Check id="out-asc">Aufsteigend</Check>
          </div>
        </div>
        <div className="mt-[10px] flex justify-end gap-[10px] text-[#15181c]">
          <button type="button" className="h-[22px] w-[74px] rounded-xs bg-linear-to-b from-[#f3f4f6] to-[#b9bcc5]">OK</button>
          <button type="button" className="h-[22px] w-[74px] rounded-xs bg-linear-to-b from-[#f3f4f6] to-[#b9bcc5]">Abbrechen</button>
        </div>
      </div>
      <svg className="pointer-events-none absolute top-[45px] left-[210px] h-[95px] w-[100px]" viewBox="0 0 100 95">
        <path d="M95 4L12 82" stroke="#ff8080" strokeWidth="2.500" strokeLinecap="round" />
        <path d="M2 92L6 75L19 89Z" fill="#ff8080" stroke="#ff8080" />
      </svg>
    </form>
  );
}

export default function App() {
  return (
    <div className="relative flex h-screen flex-col overflow-hidden bg-[#23272e] font-['Liberation_Sans',Arial,sans-serif]">
      <TitleBar />
      <nav className="flex h-[21px] shrink-0 items-center gap-px border-t border-[#4b6473] bg-linear-to-b from-white from-30% to-[#d8dcf0] to-40% font-['Open_Sans',sans-serif] text-[11px] text-[#6b6e75]">
        {menuItems.map((item) => (
          <a key={item} href={`#${item}`} className="px-[7px]">{item}</a>
        ))}
      </nav>
      <Toolbar />
      <div className="flex min-h-0 flex-1">
        <TrackList />
        <Arrange />
        <div className="flex w-[10px] shrink-0 items-center justify-center border-b border-black bg-[#a5abb5]">
          <div className="h-12 w-1 bg-[repeating-linear-gradient(to_bottom,#6b6f78_0_1px,transparent_1px_3px)]" />
        </div>
        <Browser />
      </div>
      <Transport />
      <div className="flex h-[2px] shrink-0 border-t border-[#24272c] bg-[#7d8189] pl-[185px]">
        <div className="mr-[3px] w-40 bg-white" />
        <div className="mr-[3px] w-40 bg-white" />
        <div className="mr-[3px] w-40 bg-white" />
        <div className="w-40 bg-white" />
      </div>
      <Dialog />
    </div>
  );
}
